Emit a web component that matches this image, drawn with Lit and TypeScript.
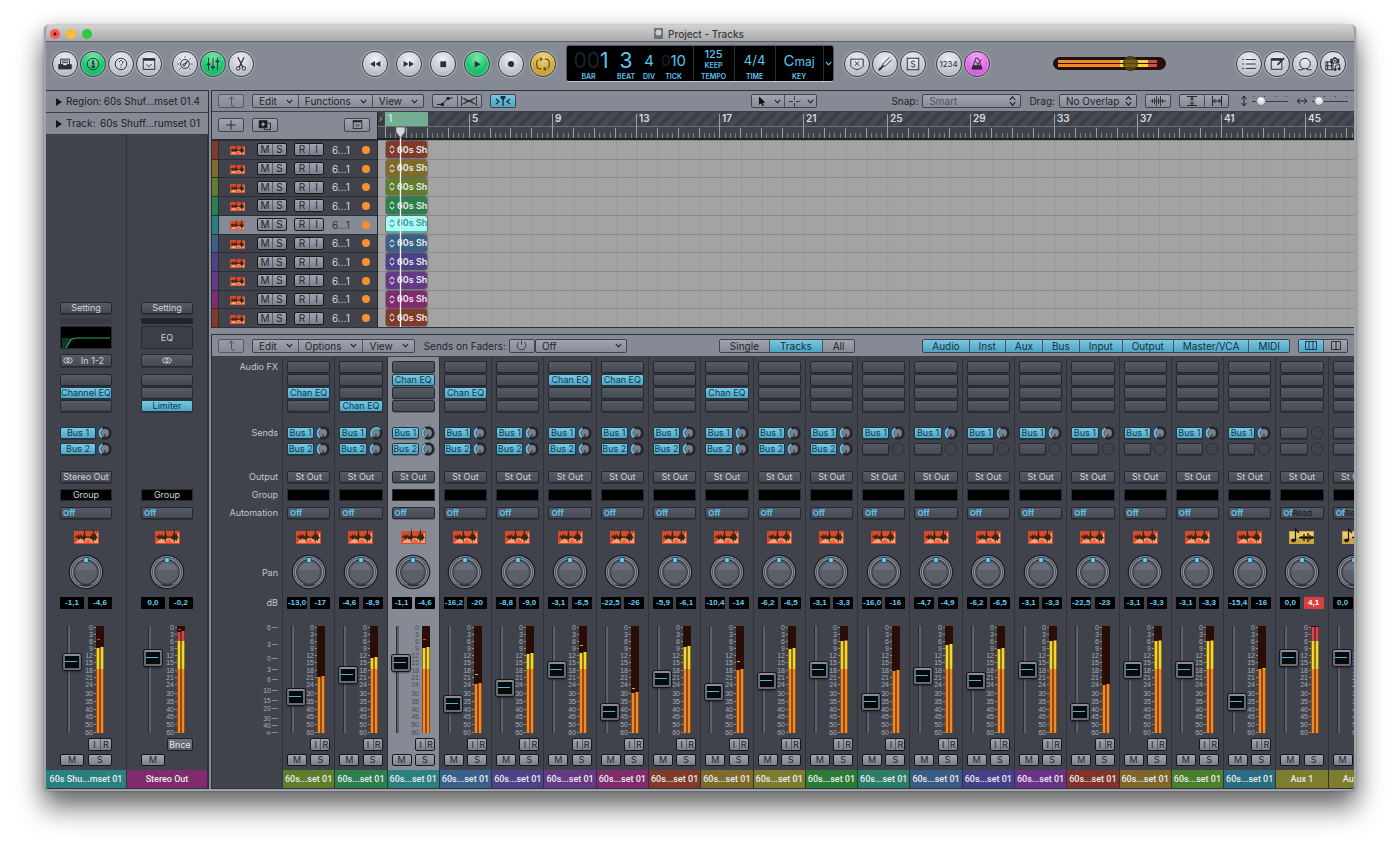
import { LitElement, html, css, svg, nothing } from "lit";
import { customElement, state } from "lit/decorators.js";
import { classMap } from "lit/directives/class-map.js";

interface Channel {
  name: string;
  color: string;
  db: [string, string];
  fader: number;
  level: number;
  peak?: number;
  fx: number;
  sends: number;
  bigSend?: boolean;
  aux?: boolean;
  clip?: boolean;
}

const ch = (color: string, a: string, b: string, fader: number, level: number, fx = -1, sends = 2, more: Partial<Channel> = {}): Channel => ({
  name: "60s...set 01", color, db: [a, b], fader, level, fx, sends, ...more,
});

const CHANNELS: Channel[] = [
  ch("#5f7d2c", "-13,0", "-17", 36, 50, 2),
  ch("#2c804b", "-4,6", "-8,9", 58, 31, 3, 2, { bigSend: true }),
  ch("#2b7f7f", "-1,1", "-4,6", 70, 21, 1, 2, { peak: 12 }),
  ch("#3a6088", "-16,2", "-20", 29, 57, 2, 2, { peak: 47 }),
  ch("#4f4189", "-8,8", "-9,0", 45, 27),
  ch("#653a84", "-3,1", "-6,5", 63, 26, 1, 2, { peak: 18 }),
  ch("#7f2b6d", "-22,5", "-26", 21, 66, 1, 2, { peak: 61 }),
  ch("#81392a", "-5,9", "-6,1", 54, 20),
  ch("#7e6a2b", "-10,4", "-14", 41, 43, 2, 2, { peak: 34 }),
  ch("#7c7c2e", "-6,2", "-6,5", 52, 22),
  ch("#2b7b36", "-3,1", "-3,3", 63, 14),
  ch("#2c7d68", "-16,0", "-16", 31, 44, -1, 1),
  ch("#395a82", "-4,7", "-4,9", 57, 18, -1, 1),
  ch("#44418a", "-6,2", "-6,5", 52, 22, -1, 1),
  ch("#6a3189", "-3,1", "-3,3", 63, 14, -1, 1),
  ch("#81342a", "-22,5", "-23", 21, 58, -1, 1),
  ch("#7e662b", "-3,1", "-3,3", 63, 14, -1, 1),
  ch("#4a7f2c", "-3,1", "-3,3", 63, 14, -1, 1),
  ch("#2b6c80", "-15,4", "-16", 31, 42, -1, 1),
  ch("#7e7c2e", "0,0", "4,1", 75, 0, -1, 0, { name: "Aux 1", aux: true, clip: true }),
  ch("#7e7c2e", "0,0", "-6,0", 75, 20, -1, 0, { name: "Aux 2", aux: true }),
];

const TRACK_COLORS = ["#81392a", "#7e6a2b", "#5f7d2c", "#2c804b", "#2b7f7f", "#3a6088", "#4f4189", "#653a84", "#7f2b6d", "#81392a"];

const BAR = 20.9;

const SCALE: [string, number][] = [
  ["0", 0], ["3", 7], ["6", 14], ["9", 21], ["12", 28], ["15", 35], ["18", 43], ["21", 50],
  ["24", 57], ["30", 66], ["35", 74], ["40", 82], ["45", 89], ["50", 97], ["60", 105],
];
const FADER_SCALE: [string, number][] = [
  ["6", 0], ["3", 17], ["0", 31], ["3", 42], ["6", 52], ["10", 63], ["15", 73], ["20", 81], ["30", 91], ["40", 98], ["∞", 105],
];

const line = (body: unknown, size = 18) => html`<svg class="ico" width=${size} height=${size} viewBox="0 0 18 18" fill="none" stroke="currentColor" stroke-width="1.1" aria-hidden="true">${body}</svg>`;

const ICONS: Record<string, () => unknown> = {
  library: () => line(svg`<path d="M4 9V3.500h10V9M5.500 5.500h7M5.500 7.500h7"/><path d="M2 9.500h4.500l1 1.500h3l1-1.500H16v5H2z" fill="currentColor"/>`),
  info: () => line(svg`<circle cx="9" cy="9" r="6.500"/><path d="M7.500 8h2v4M7 12.300h4.300" stroke-width="1.700"/><circle cx="9" cy="5.600" r="1.200" fill="currentColor" stroke="none"/>`),
  help: () => line(svg`<circle cx="9" cy="9" r="6.500"/><path d="M6.900 7.300c0-1.500 1-2.300 2.200-2.300s2.100.8 2.100 1.900c0 1.600-2.100 1.600-2.100 3.600M9 11.800v1.300"/>`),
  toolbar: () => line(svg`<rect x="2.500" y="3" width="13" height="12"/><path d="M2.500 4h13" stroke-width="2.500"/><path d="M6 9l3 3 3-3"/>`),
  smart: () => line(svg`<circle cx="9" cy="9" r="5"/><circle cx="8" cy="10" r="1.300"/><path d="M9 9l3-3" stroke-width="1.500"/><path d="M9 .500V2M.5 9H2M16 9h1.500M3 3l1 1M14 4l1-1M3 15l1-1M14 14l1 1"/>`),
  mixer: () => line(svg`<path d="M4 2v14M9 2v14M14 2v14"/><path d="M1.800 9.500h4.400M6.800 12.500h4.400M11.800 6h4.400" stroke-width="2"/>`),
  scissors: () => line(svg`<path d="M5.500 1.500l5.500 11M12.500 1.500L7 12.500" stroke-width="1.400"/><circle cx="5.800" cy="14" r="2"/><circle cx="12.200" cy="14" r="2"/>`),
  rewind: () => line(svg`<path d="M9 5.500v7L3.500 9zM15 5.500v7L9.500 9z" fill="currentColor" stroke="none"/>`),
  forward: () => line(svg`<path d="M3 5.500v7L8.500 9zM9 5.500v7L14.500 9z" fill="currentColor" stroke="none"/>`),
  stop: () => line(svg`<rect x="6" y="6" width="6.500" height="6.500" fill="currentColor" stroke="none"/>`),
  play: () => line(svg`<path d="M6.500 5.500v7.500L13 9.200z" fill="currentColor" stroke="none"/>`),
  record: () => line(svg`<circle cx="9" cy="9" r="3.500" fill="currentColor" stroke="none"/>`),
  cycle: () => line(svg`<path d="M7 14.500H5.500a3.500 3.500 0 0 1-3.500-3.500V7a3 3 0 0 1 2-2.800M11 3.500h1.500A3.500 3.500 0 0 1 16 7v4a3 3 0 0 1-2 2.800M5 3.500h2.500M13 14.500h-2.500M6 1.500l2.300 2L6 5.500M12 12.500l-2.300 2 2.300 2"/>`),
  replace: () => line(svg`<path d="M2 3.500h14v6.500c0 3-3 4-7 5.500-4-1.500-7-2.500-7-5.500zM6.500 6l5 5M11.500 6l-5 5"/>`),
  tuner: () => line(svg`<path d="M7.300 8L14 1.500M10 10.700L16.500 4.500M7.300 8c-1 1.200-.8 2.500-.3 3 .5.500 1.900.700 3-.3"/><path d="M2 16l5-5" stroke-width="2.200"/>`),
  solo: () => line(svg`<rect x="2.500" y="2.500" width="13" height="13"/><path d="M11.200 6.700C10.700 5.300 7 5.200 7 7.200c0 2.200 4.300 1.200 4.300 3.500 0 2.200-4.200 2-4.500.2"/>`),
  metronome: () => line(svg`<path d="M7.500 2.500h3l4 12h-11z"/><path d="M4.700 11h8.600l1.200 3.500h-11z" fill="currentColor"/><path d="M9 11l5-7M6.500 5.500l4 4"/>`),
  list: () => line(svg`<path d="M5.500 4h11M5.500 9h11M5.500 14h11M1.500 4h2M1.500 9h2M1.500 14h2"/>`),
  note: () => line(svg`<path d="M2.500 3h12v12h-12z"/><path d="M2.500 4h12" stroke-width="2.500"/><path d="M17 2.500L9.500 10" stroke-width="2"/>`),
  loop: () => line(svg`<circle cx="9" cy="8.500" r="6"/><path d="M1.500 15.500h5c.3-.8 0-1.300-.5-1.700M16.500 15.500h-5c-.3-.8 0-1.300.5-1.700"/>`),
  media: () => line(svg`<rect x="1" y="6.500" width="8" height="9"/><path d="M3 6.500v9M7.500 6.500v9M1 11h8"/><path d="M6 3h2.500l1-1.500h3l1 1.500H16v5.500H6z" fill="currentColor" stroke="none"/><circle cx="11" cy="5.500" r="1.700" stroke="#ddd" fill="none"/><path d="M12 15.500v-5l4.500-1v5"/><circle cx="11.300" cy="15.300" r="1.200" fill="currentColor"/><circle cx="15.800" cy="14.500" r="1.200" fill="currentColor"/>`),
  up: () => line(svg`<path d="M12.500 15.500c-2.800 0-3.500-1-3.500-3V3M5.500 6.500L9 2.500l3.500 4"/>`, 13),
  plus: () => line(svg`<path d="M9 3v12M3 9h12"/>`, 14),
  dup: () => line(svg`<rect x="1.500" y="3.500" width="10" height="9" fill="currentColor"/><path d="M12 6.500h4v8.500H8v-2.500"/><path d="M6.500 5.500v5M4 8h5" stroke="#b4b8c2" stroke-width="1.500"/>`, 14),
  panel: () => line(svg`<rect x="3" y="3.500" width="12" height="11"/><path d="M3 5h12" stroke-width="2"/><path d="M6.500 8.500l2.500 3 2.500-3"/>`, 13),
  curve: () => html`<svg width="20" height="12" viewBox="0 0 20 12" fill="none" stroke="currentColor" aria-hidden="true"><path d="M2 9.500h5L13 3h5"/><rect x="6" y="8" width="3" height="3" fill="currentColor" stroke="none"/><rect x="11.500" y="2" width="3" height="3" fill="currentColor" stroke="none"/></svg>`,
  flex: () => html`<svg width="20" height="12" viewBox="0 0 20 12" fill="none" stroke="currentColor" stroke-width=".8" aria-hidden="true"><path d="M2.500 1v10M17.500 1v10M2.500 2q7.500 8 15 0M2.500 10q7.500-8 15 0M5 3l10 6M15 3L5 9"/></svg>`,
  catch: () => html`<svg width="18" height="12" viewBox="0 0 18 12" fill="none" stroke="currentColor" stroke-width="1.300" aria-hidden="true"><path d="M2 4l3 2.500L2 9M16 4l-3 2.500L16 9M9 3v8"/><path d="M6.500 1h5v2L9 5.500 6.500 3z" fill="currentColor" stroke="none"/></svg>`,
  pointer: () => line(svg`<path d="M5.500 2v12l3-2.600 1.800 4 2-.9-1.800-3.900h4z" fill="#0c0d10" stroke="none"/>`, 13),
  cross: () => line(svg`<path d="M9 1v6M9 11v6M1 9h6M11 9h6"/>`, 13),
  power: () => line(svg`<path d="M9 2v6M5.500 4a6 6 0 1 0 7 0"/>`, 13),
  wave: () => html`<svg width="18" height="12" viewBox="0 0 18 12" stroke="currentColor" stroke-width=".8" aria-hidden="true"><path d="M1 6h16M3.500 4v4M5.500 3v6M7.500 1v10M9.500 3v6M11.500 1v10M13.500 4v4"/></svg>`,
  vzoom: () => html`<svg width="12" height="12" viewBox="0 0 12 12" fill="none" stroke="currentColor" aria-hidden="true"><path d="M1 1.500h10M1 10.500h10M6 2v8M4 4.500l2-2 2 2M4 7.500l2 2 2-2"/></svg>`,
  hzoom: () => html`<svg width="12" height="12" viewBox="0 0 12 12" fill="none" stroke="currentColor" aria-hidden="true"><path d="M1.500 1v10M10.500 1v10M2 6h8M4.500 4l-2 2 2 2M7.500 4l2 2-2 2"/></svg>`,
  varrow: () => html`<svg width="8" height="12" viewBox="0 0 8 12" fill="none" stroke="currentColor" aria-hidden="true"><path d="M4 1v10M1.500 4L4 1l2.500 3M1.500 8L4 11l2.500-3"/></svg>`,
  harrow: () => html`<svg width="12" height="8" viewBox="0 0 12 8" fill="none" stroke="currentColor" aria-hidden="true"><path d="M1 4h10M4 1.500L1 4l3 2.500M8 1.500L11 4 8 6.500"/></svg>`,
  wide: () => html`<svg width="12" height="9" viewBox="0 0 12 9" fill="none" stroke="currentColor" stroke-width=".9" aria-hidden="true"><path d="M.5.500h11v8H.5zM4 .500v8M8 .500v8"/></svg>`,
  two: () => html`<svg width="10" height="9" viewBox="0 0 10 9" fill="none" stroke="currentColor" stroke-width=".9" aria-hidden="true"><path d="M.5.500h9v8h-9zM5 .500v8"/></svg>`,
  stereo: () => html`<svg width="10" height="7" viewBox="0 0 10 7" fill="none" stroke="currentColor" aria-hidden="true"><circle cx="3.500" cy="3.500" r="2.700"/><circle cx="6.500" cy="3.500" r="2.700"/></svg>`,
};

const chevron = () => html`<svg class="chev" width="7" height="5" viewBox="0 0 7 5" fill="none" stroke="currentColor" stroke-width="1.200" aria-hidden="true"><path d="M.8.800l2.700 3L6.200.800"/></svg>`;
const updown = () => html`<svg class="updown" width="7" height="10" viewBox="0 0 7 10" fill="none" stroke="currentColor" stroke-width="1.200" aria-hidden="true"><path d="M.8 3.800l2.700-3 2.700 3M.8 6.200l2.700 3 2.700-3"/></svg>`;

const waveIcon = (w: number, h: number) => html`<svg class="wave-icon" width=${w} height=${h} viewBox="0 0 25 16" preserveAspectRatio="none" aria-hidden="true">
  <rect y="3" width="25" height="13" fill="#d94a2b"/><path d="M1 15l8-8 5 3 10-5v10z" fill="#f4a27c"/><path d="M10 15l4-5 4 5z" fill="#ee6840"/>
  <path d="M1 9.500l1.500-2.500 1 1.500 1-2.500 1 2L7 6l1 2.500L9.500 7l1-7 .8 7 1.700 2 1-1 1.500 1L17 7.500l1.500-1.500L19.500 0l.8 6.500L22 6l1 3 1 1-1.500.5-1 2.500-1.500-1.500-.8 4-.9-4-1.800-.5-1-1-1.500-.3-1.500.3-1.500 1-.8 4-.9-4-1.700.5-1.200-1.500-1.500 2-1.500-2z" fill="#3c2713"/></svg>`;

const auxIcon = () => html`<svg class="wave-icon" width="25" height="16" viewBox="0 0 25 16" aria-hidden="true">
  <rect y="3" width="25" height="13" fill="#c9a63f"/><rect x="1" y="4" width="23" height="6" fill="#e8cb6b"/>
  <ellipse cx="4.500" cy="12.500" rx="2.300" ry="1.800" fill="#1a1408"/><path d="M6.500 12.500V1l3.500 4" stroke="#1a1408" stroke-width="1.200" fill="none"/>
  <path d="M10 9.500h15M13 8v3M15 6v7M17 8v3M19 5v9M21 7v5M23 8v3" stroke="#1a1408" stroke-width="1.300"/></svg>`;

const knob = () => html`<button class="knob" aria-label="Pan"><svg width="36" height="36" viewBox="0 0 36 36" aria-hidden="true">
  <circle cx="18" cy="18" r="17.300" fill="#1d1f24"/><circle cx="18" cy="18" r="16" fill="#8a8e98"/><circle cx="18" cy="18" r="14.800" fill="#34373e"/>
  <path d="M12.500 30.500a13.500 13.500 0 1 1 11 0" fill="none" stroke="#9296a0" stroke-width="1.200"/>
  <circle cx="18" cy="18" r="11.500" fill="#5b5f6a" stroke="#4c505a"/><path d="M7.500 16a11 11 0 0 1 21 0z" fill="#6a6e79"/>
  <rect x="15.500" y="3" width="5" height="5.500" rx="1" fill="#1c4258"/><rect x="16.200" y="4" width="3.600" height="4" fill="#62d0fa"/></svg></button>`;

const sendKnob = (on: boolean, big = false) => html`<svg class="send-knob" width="14" height="14" viewBox="0 0 14 14" aria-hidden="true">
  ${on ? svg`<circle cx="7" cy="7" r="6.700" fill="#24262c"/><path d=${big ? "M3.500 11A5.300 5.300 0 1 1 11.200 3.700" : "M4 11.400A5.300 5.300 0 0 1 4.500 2.300"} fill="none" stroke="#5cc3ec" stroke-width="1.900"/><circle cx="7" cy="7" r="3.900" fill="#7c808b"/><path d="M7 8v5" stroke="#24262c"/>`
    : svg`<circle cx="7" cy="7" r="6" fill="none" stroke="#2c2f36"/>`}</svg>`;

const segment = (x: number, level: number) => {
  const bands: [number, number, string][] = [[0, 14, "#d9484c"], [14, 42, "#f3d72e"], [42, 106, "#f58a25"]];
  return bands.map(([a, b, c]) => (level < b ? svg`<rect x=${x} y=${8 + Math.max(a, level)} width="3" height=${b - Math.max(a, level)} fill=${c}/>` : nothing));
};

const meter = (level: number, peak?: number) => html`<svg class="meter" width="25" height="118" viewBox="0 0 25 118" role="img" aria-label="Level">
  ${SCALE.map(([t, y]) => svg`<text x="9" y=${y + 11} text-anchor="end">${t}</text><path class="tick" d="M10 ${y + 8.5}h2"/>`)}
  <rect x="12" y="7" width="8" height="107" fill="#2a0e06"/>
  ${segment(12.5, level)}${segment(16.5, level > 0 ? level - 1 : 0)}
  ${peak !== undefined ? svg`<rect x="13" y=${peak + 8} width="3" height="1" fill=${peak < 14 ? "#e0383c" : "#f5a025"}/>` : nothing}
</svg>`;

@customElement("app-root")
export class AppRoot extends LitElement {
  @state() private selected = 2;
  @state() private track = 4;
  @state() private viewport = window.innerWidth;

  private onResize = () => { this.viewport = window.innerWidth; };

  connectedCallback() {
    super.connectedCallback();
    window.addEventListener("resize", this.onResize);
  }

  disconnectedCallback() {
    window.removeEventListener("resize", this.onResize);
    super.disconnectedCallback();
  }

  static styles = css`
    :host { display: block; box-sizing: border-box; min-height: 100vh; padding: 25px 44px 62px; background: #fff; font: 400 10px/12px Inter, "Liberation Sans", sans-serif; color: #1b1d22; }
    *, *::before { box-sizing: border-box; }
    button, select, input { font: inherit; color: inherit; margin: 0; padding: 0; border: 0; background: none; border-radius: 0; outline: none; }
    svg { display: block; flex: none; }
    label { white-space: nowrap; }
    .window { background: #868a95; border: 2px solid #9fa3ad; border-top: 0; border-radius: 5px 5px 4px 4px; box-shadow: 0 18px 28px rgba(0,0,0,.46), 0 6px 22px rgba(0,0,0,.3), 0 0 2px rgba(0,0,0,.35); overflow: hidden; }
    .title { height: 17px; display: flex; align-items: center; padding: 1px 6px 0 4px; background: linear-gradient(#d2d2d2, #a9a9a9); border-bottom: 1px solid #5b5e66; font-size: 10px; font-weight: 500; color: #3a3a3a; }
    .lights { flex: 1; display: flex; gap: 6px; }
    .light { width: 10px; height: 10px; border-radius: 50%; }
    .light.r { background: radial-gradient(circle, #5b0b08 0 1px, #fb5b55 2px); } .light.y { background: #fcbb34; } .light.g { background: #2fc840; }
    .title .name { display: flex; gap: 5px; align-items: center; }
    .fill { flex: 1; }
    .controls { display: flex; align-items: center; height: 48px; padding: 0 8px 5px 6px; }
    .group { display: flex; gap: 2px; }
    .sp-a { flex: 108; } .sp-b { flex: 64; } .sp-c { flex: 70; }
    .round { width: 26px; height: 26px; border-radius: 50%; border: 1px solid #3a3d45; display: grid; place-items: center; color: #2c2f37; background: radial-gradient(circle at 50% 30%, #eef0f4, #c3c6cf 60%, #9fa3ae); box-shadow: 0 0 0 1px #a5a9b4, inset 0 0 2px #fff; font-size: 8px; }
    .round .ico { width: 16px; height: 16px; }
    .round.on { background: radial-gradient(circle at 50% 25%, #7fe8a9, #1fc673 50%, #12b163); }
    .round.gold { background: radial-gradient(circle at 50% 25%, #f2d778, #d0a634 60%, #b98f25); }
    .round.pink { background: radial-gradient(circle at 50% 25%, #f6a9f8, #df63e6 60%, #c94fd2); }
    .transport { display: flex; gap: 8px; }
    .cycle { margin: 0 10px 0 6px; }
    .lcd { display: flex; width: 268px; height: 37px; background: #000; border-radius: 3px; border: 1px solid #555963; border-bottom-color: #c5c8d0; color: #5cc6f1; overflow: hidden; margin-right: 10px; }
    .lcd .cell { display: grid; grid-template-rows: 25px 10px; justify-items: center; }
    .lcd .cell + .cell.sec { border-left: 1px solid #2c2f33; }
    .lcd .val { align-self: end; line-height: 20px; font-size: 15px; white-space: nowrap; }
    .lcd .big { font-size: 21px; }
    .lcd .dim { color: #17262d; }
    .lcd .lab { font-size: 7px; font-weight: 600; line-height: 12px; }
    .lcd .bar { width: 44px; } .lcd .bar .val { justify-self: end; padding-right: 2px; } .lcd .beat { width: 31px; } .lcd .div { width: 15px; } .lcd .tk { width: 36px; padding-right: 2px; }
    .lcd .tempo { width: 41px; } .lcd .time { width: 41px; } .lcd .time .val { font-size: 13px; line-height: 22px; }
    .lcd .note-key { width: 48px; } .lcd .note-key .val { font-size: 12px; line-height: 18px; } .lcd .note-key b { font-weight: 400; font-size: 15px; }
    .lcd .stack { align-self: end; text-align: center; font-size: 11px; font-weight: 500; line-height: 13px; }
    .lcd .stack small { display: block; font-size: 7px; font-weight: 600; line-height: 10px; }
    .lcd .more { flex: 1; border-left: 1px solid #2c2f33; display: grid; place-items: center; }
    .pair { margin-left: 10px; }
    .master { appearance: none; width: 113px; height: 13px; border-radius: 7px; border: 1px solid #24100a; background: linear-gradient(#25100a, #25100a) 0 5px / 100% 1px no-repeat, linear-gradient(90deg, #25100a 4px, #f58a25 4px 66px, #f3d72e 66px 94px, #d9484c 94px 103px, #25100a 103px) 0 2px / 100% 7px no-repeat, #25100a; }
    .master::-webkit-slider-thumb { appearance: none; width: 15px; height: 15px; border-radius: 50%; background: rgba(90, 74, 20, .85); border: 1px solid #3d3312; }

    .body { display: grid; grid-template-columns: 163px 1fr; gap: 2px; }
    .inspector { display: flex; flex-direction: column; border: 1px solid #2d3037; border-left: 0; }
    .info { display: flex; align-items: center; justify-content: space-between; height: 22px; padding: 0 8px 2px 10px; border-bottom: 1px solid #3c3f47; }
    .info span:first-child::before { content: ""; display: inline-block; border: 4px solid transparent; border-left: 6px solid #15171b; border-right: 0; margin-right: 4px; vertical-align: -1px; }
    .insp-strips { flex: 1; display: grid; grid-template-columns: 1fr 1fr; background: #40434c; }
    .insp-strips .strip { padding-top: 0; border-left: 0; border-right: 1px solid #2f3239; }
    .insp-strips .strip > * { margin-left: 14px; margin-right: 14px; }
    .insp-strips .strip > .tag { margin-left: 0; margin-right: 0; }
    .insp-strips .faders { padding-left: 3px; grid-template-columns: 18px 28px; gap: 3px; }
    .insp-strips .pairs > *, .insp-strips .ir { width: 24px; }
    .push { flex: 1; }
    .thin { height: 6px; background: #383b43; margin-top: 4px; margin-bottom: 2px; }
    .thin.dark { background: #22242a; }
    .eq { height: 23px; border: 1px solid #262830; border-radius: 2px; display: grid; place-items: center; background: #3b3e46; color: #c9ccd3; font-size: 9px; }
    .eq.live { background: #000; }
    .slot.in { display: grid; grid-template-columns: 13px 1fr; margin: 5px 0 7px; height: 13px; }
    .slot.in.solo { grid-template-columns: 1fr; }
    .slot.in > * { place-self: center; }

    .main { display: flex; flex-direction: column; min-width: 0; }
    .panel { border: 1px solid #2d3037; border-right: 0; overflow: hidden; }
    .bar-row { display: flex; align-items: center; height: 21px; padding: 0 6px 0 6px; border-bottom: 1px solid #3c3f47; color: #22252b; }
    .seg { display: flex; height: 14px; border: 1px solid #3a4656; border-radius: 2px; background: linear-gradient(#a1a5b0, #878b96); }
    .seg > button { display: flex; align-items: center; justify-content: center; gap: 9px; padding: 0 5px 0 6px; }
    .seg > button + button { border-left: 1px solid #4a5160; }
    .seg.icons > button { width: 24px; padding: 0; }
    .seg.tools-seg > button { width: 32px; gap: 6px; padding: 0; }
    .seg.faint { opacity: .7; }
    .seg .sel, .seg.blue { background: linear-gradient(#7cc6de, #4ea5c4); color: #142f3d; }
    .m8 { margin-left: 8px; }
    .seg.blue > button { padding: 0 9px; } .seg.plain > button { padding: 0 10px; }
    .g-a { flex: 237; } .g-b { flex: 75; } .g-c { flex: 95; } .g-d { flex: 69; }
    .pick { position: relative; display: flex; align-items: center; height: 14px; border: 1px solid #3a4656; border-radius: 2px; background: linear-gradient(#a1a5b0, #878b96); }
    .pick select { appearance: none; width: 100%; height: 12px; padding: 0 14px 0 6px; line-height: 12px; }
    .pick .updown, .pick .chev { position: absolute; right: 4px; pointer-events: none; }
    .snap { width: 99px; color: #4f535d; margin-left: 4px; } .snap svg { color: #22252b; } .drag { width: 78px; margin-left: 4px; }
    .off { width: 92px; }
    .sof { margin: 0 3px 0 9px; }
    .zooms { display: flex; align-items: center; gap: 4px; margin-left: 11px; }
    .zooms + .zooms { margin-left: 8px; }
    .zoom { appearance: none; width: 36px; height: 10px; background: linear-gradient(#3a3d45, #3a3d45) 0 5px / 100% 1px no-repeat, repeating-linear-gradient(90deg, #3a3d45 0 1px, transparent 1px 11px) 1px 0 / 100% 1px no-repeat; }
    .zoom::-webkit-slider-thumb { appearance: none; width: 10px; height: 10px; border-radius: 50%; background: radial-gradient(circle at 50% 30%, #fff, #b9bcc5); border: 1px solid #777b86; }

    .tracks { display: grid; grid-template-columns: 166px 1fr; grid-template-rows: 28px 187px; position: relative; }
    .tools { display: flex; align-items: center; padding: 0 7px 2px 6px; border-bottom: 1px solid #24262c; border-right: 1px solid #24262c; }
    .ruler { background: #40434c; overflow: hidden; }
    .ruler svg { width: 100%; }
    .ruler text { font-size: 10px; font-weight: 600; fill: #d9dbe0; }
    .heads { display: flex; flex-direction: column; background: #24262c; border-right: 1px solid #24262c; }
    .head { flex: 1; display: flex; align-items: center; background: #40434c; border-top: 1px solid #2a2d34; color: #d5d8df; font-size: 10px; cursor: default; }
    .head.sel { background: #868a95; color: #2c2f37; }
    .head .chip { width: 7px; align-self: stretch; margin-right: 11px; border-right: 1px solid #2a2d34; }
    .two { display: grid; grid-template-columns: 1fr 1fr; width: 30px; height: 13px; border: 1px solid #15171b; border-radius: 2px; background: linear-gradient(#a0a4af, #7c808c); color: #20232a; }
    .two button { line-height: 11px; } .two button + button { border-left: 1px solid #565b67; }
    .head .two { font-size: 10px; } .head .a { margin-left: 12px; } .head .b { margin: 0 8px 0 7px; }
    .dot { width: 8px; height: 8px; border-radius: 50%; background: #f7902c; margin-left: auto; margin-right: 7px; }
    .lanes { display: flex; flex-direction: column; background: linear-gradient(90deg, #989998 1px, transparent 1px) 8px 0 #a3a4a2; }
    .lane { flex: 1; border-top: 1px solid #888988; padding-left: 8px; display: flex; }
    .region { width: 41px; height: 17px; border-radius: 3px; display: flex; align-items: center; gap: 2px; padding-left: 3px; color: #eceef2; font-size: 9px; font-weight: 600; white-space: nowrap; overflow: hidden; box-shadow: 0 0 0 1px rgba(0,0,0,.25); }
    .region.sel { background: #a6fdf6; color: #3f8f8c; border-bottom: 2px solid #49b3ae; }
    .region svg { width: 6px; height: 9px; }
    .playhead { position: absolute; left: 183px; top: 14px; bottom: 0; width: 11px; }
    .gap { height: 6px; }

    .mixer .bar-row { height: 22px; }
    .desk { display: flex; background: #40434c; overflow: hidden; }
    .labels { flex: none; width: 70px; display: flex; flex-direction: column; align-items: flex-end; padding: 4px 4px 0 0; color: #c3c6cd; font-size: 9px; line-height: 12px; }
    .labels .l1 { margin-bottom: 54px; } .labels .l2 { margin-bottom: 32px; } .labels .l3 { margin-bottom: 6px; } .labels .l4 { margin-bottom: 6px; } .labels .l5 { margin-bottom: 48px; } .labels .l6 { margin-bottom: 18px; } .labels .l7 { margin-bottom: 10px; }
    .strips { flex: 1; min-width: 0; display: flex; overflow: hidden; }
    .strips .strip { flex: 0 0 calc(100% / 20.5); }
    .strip { display: flex; flex-direction: column; padding-top: 4px; border-left: 1px solid #2f3239; min-width: 0; }
    .strips .strip > * { margin-left: 4px; margin-right: 4px; }
    .strips .strip > .tag { margin-left: 0; margin-right: 0; }
    .strip.sel { background: #868a95; }
    .slot { display: block; width: 100%; height: 12px; border: 1px solid #25272d; border-radius: 2px; background: linear-gradient(#575b66, #454953); color: #d0d3da; font-size: 9px; line-height: 10px; text-align: center; white-space: nowrap; overflow: hidden; box-shadow: 0 1px 0 rgba(0,0,0,.25); }
    .slot.blue { background: linear-gradient(#78c8e2, #4da6c6); color: #10394c; border-color: #1d3541; }
    .fx { display: flex; flex-direction: column; gap: 1px; }
    .sends { display: grid; gap: 4px; margin-top: 15px; height: 28px; }
    .send { display: flex; justify-content: space-between; align-items: center; height: 12px; }
    .send .slot { flex: 1; width: auto; margin-right: 2px; }
    .send-knob { margin: -1px 0; }
    .wrap { display: block; } .out { margin-top: 16px; height: 12px; }
    .grp { height: 12px; margin-top: 6px; background: #000; border: 1px solid #2a2c33; color: #d0d3da; font-size: 9px; line-height: 10px; text-align: center; }
    .auto { margin-top: 6px; height: 12px; }
    .auto .slot { text-align: left; padding-left: 2px; color: #5cc6f2; font-size: 8px; font-weight: 700; }
    .auto i { font-style: normal; color: #17191d; font-weight: 400; }
    .pic { margin-top: 9px; display: grid; place-items: center; }
    .pan { margin-top: 10px; display: grid; place-items: center; height: 36px; }
    .pairs { display: flex; justify-content: space-between; height: 12px; }
    .pairs > * { width: 20px; height: 12px; }
    .dbs { margin-top: 7px; }
    .db { background: #000; color: #66ccf6; font-size: 8px; font-weight: 700; line-height: 12px; text-align: center; border-radius: 1px; white-space: nowrap; font-family: "Liberation Sans", sans-serif; }
    .db.clip { background: #d9403c; color: #fff; }
    .faders { display: grid; grid-template-columns: 18px 1fr; margin-top: 10px; height: 132px; }
    .fader { appearance: none; writing-mode: vertical-lr; direction: rtl; width: 18px; height: 122px; background: linear-gradient(90deg, #2a2c33 0 1px, #5c606b 1px 3px) 4px 7px / 3px 107px no-repeat; }
    .fader::-webkit-slider-thumb { appearance: none; width: 18px; height: 16px; border: 2px solid #676b76; border-top-color: #8a8e99; border-radius: 2px; background: linear-gradient(#4fb4dc, #4fb4dc) 0 5px / 12px 1px no-repeat, #08090b; box-shadow: 0 0 0 1px #15171b, 0 2px 2px rgba(0,0,0,.4); }
    .col { display: flex; flex-direction: column; align-items: flex-end; justify-content: space-between; }
    .strips .col .meter { margin-right: 0; }
    .insp-strips .col .meter { align-self: flex-start; }
    .meter text, .fscale text { font-size: 7px; fill: #a9adb6; font-family: "Liberation Sans", sans-serif; }
    .tick { stroke: #8b8f98; }
    .strip.sel .meter text { fill: #4a4e58; }
    .ir { width: 20px; font-size: 9px; } .ms { margin-top: 3px; }
    .bnce { width: 26px; height: 13px; border: 1px solid #1c1e23; border-radius: 2px; background: linear-gradient(#70747f, #595d68); color: #e1e3e8; font-size: 9px; line-height: 11px; }
    .key { border: 1px solid #15171b; border-radius: 2px; background: linear-gradient(#a0a4af, #7c808c); color: #20232a; font-size: 9px; line-height: 10px; }
    .tag { margin-top: 4px; height: 18px; line-height: 18px; text-align: center; color: #e8eaee; font-family: Roboto, sans-serif; font-size: 9px; font-weight: 500; white-space: nowrap; overflow: hidden; }
  `;

  private menu(label: string) {
    return html`<button>${label}${chevron()}</button>`;
  }

  private round(icon: string, label: string, cls = "") {
    return html`<button class="round ${cls}" aria-label=${label} title=${label}>${ICONS[icon]()}</button>`;
  }

  private iconSeg(icons: string[], cls = "") {
    return html`<div class="seg icons ${cls}">${icons.map((i) => html`<button aria-label=${i}>${ICONS[i]()}</button>`)}</div>`;
  }

  private lower(c: Channel, bounce = false) {
    return html`
      <div class="wrap auto"><button class="slot">${c.aux ? html`Of<i>Read</i>` : "Off"}</button></div>
      <div class="pic">${c.aux ? auxIcon() : waveIcon(25, 16)}</div>
      <div class="pan">${knob()}</div>
      <div class="pairs dbs"><span class="db">${c.db[0]}</span><span class=${classMap({ db: true, clip: !!c.clip })}>${c.db[1]}</span></div>
      <div class="faders">
        <input class="fader" type="range" min="0" max="106" .value=${String(c.fader)} aria-label="Volume" />
        <div class="col">${meter(c.level, c.peak)}
          ${bounce ? html`<button class="bnce">Bnce</button>` : c.aux ? nothing : html`<div class="two ir"><button>I</button><button>R</button></div>`}
        </div>
      </div>
      <div class="pairs ms"><button class="key">M</button>${bounce ? nothing : html`<button class="key">S</button>`}</div>
      <div class="tag" style="background:${c.color}">${c.name}</div>`;
  }

  private strip(c: Channel, i: number) {
    return html`<section class=${classMap({ strip: true, sel: i === this.selected })} @click=${() => (this.selected = i)}>
      <div class="fx">${[0, 1, 2, 3].map((n) => html`<button class="slot ${n === c.fx ? "blue" : ""}">${n === c.fx ? "Chan EQ" : ""}</button>`)}</div>
      <div class="sends">${[0, 1].map((n) => html`<div class="send"><button class="slot ${n < c.sends ? "blue" : ""}">${n < c.sends ? `Bus ${n + 1}` : ""}</button>${sendKnob(n < c.sends, c.bigSend && n === 0)}</div>`)}</div>
      <div class="wrap out"><button class="slot">St Out</button></div>
      <div class="grp"></div>
      ${this.lower(c)}
    </section>`;
  }

  private inspectorStrips() {
    const a: Channel = ch("#2b7f7f", "-1,1", "-4,6", 71, 21, 1, 2, { peak: 12, name: "60s Shu...mset 01" });
    const b: Channel = ch("#7f2b6d", "0,0", "-0,2", 75, 5, 2, 0, { peak: 2, name: "Stereo Out" });
    return [a, b].map((c, i) => html`<section class="strip">
      <div class="push"></div>
      <div class="wrap"><button class="slot">Setting</button></div>
      <div class="thin ${i ? "dark" : ""}"></div>
      <div class="eq ${i ? "" : "live"}">${i ? "EQ" : html`<svg width="50" height="21" viewBox="0 0 50 21" aria-hidden="true"><path d="M5 21C9 14 10 11 14 11H1v10z" fill="#0d3a25"/><path d="M5 21C9 14 10 11 15 11h34" fill="none" stroke="#2fa368" stroke-width="1.200"/></svg>`}</div>
      <div class="wrap"><button class="slot in ${i ? "solo" : ""}">${ICONS.stereo()}${i ? nothing : html`<span>In 1-2</span>`}</button></div>
      <div class="fx">${[0, 1, 2].map((n) => html`<button class="slot ${n === c.fx ? "blue" : ""}">${n === c.fx ? (i ? "Limiter" : "Channel EQ") : ""}</button>`)}</div>
      <div class="sends">${i ? nothing : [0, 1].map((n) => html`<div class="send"><button class="slot blue">Bus ${n + 1}</button>${sendKnob(true)}</div>`)}</div>
      <div class="wrap out">${i ? nothing : html`<button class="slot">Stereo Out</button>`}</div>
      <div class="grp">Group</div>
      ${this.lower(c, i === 1)}
    </section>`);
  }

  private ruler() {
    const x0 = 8;
    const count = Math.ceil((this.viewport - 424) / BAR);
    const bars = Array.from({ length: Math.max(count, 1) }, (_, i) => i);
    return html`<svg height="28" aria-label="Bars">
      <defs><pattern id="hatch" width="9" height="9" patternUnits="userSpaceOnUse" patternTransform="rotate(45)"><rect width="9" height="9" fill="#474a53"/><rect width="4" height="9" fill="#3c3f47"/></pattern></defs>
      <rect width="100%" height="14" fill="url(#hatch)"/>
      <rect x=${x0 - 1} width="43" height="14" y="0" fill="#72ae92"/>
      <rect y="14" width="100%" height="1" fill="#6a6e78"/>
      <rect y="26" width="100%" height="2" fill="#1e2025"/>
      <path d="M1 2l5 5-5 5z" fill="#6c6f67" stroke="#24262c"/>
      ${bars.map((i) => {
        const x = Math.round(x0 + i * BAR) - 1;
        return svg`<rect x=${x} y=${i % 4 ? 16 : 2} width="1" height=${i % 4 ? 10 : 24} fill="#9b9fa8"/>
          ${[1, 2, 3].map((q) => svg`<rect x=${Math.round(x0 + i * BAR + (q * BAR) / 4) - 1} y="21" width="1" height="5" fill="#7c808a"/>`)}
          ${i % 4 ? nothing : svg`<text x=${x + 3} y="10">${i + 1}</text>`}`;
      })}
    </svg>`;
  }

  render() {
    return html`<main class="window">
      <header class="title">
        <div class="lights"><span class="light r"></span><span class="light y"></span><span class="light g"></span></div>
        <div class="name"><svg width="9" height="11" viewBox="0 0 9 11" aria-hidden="true"><rect width="9" height="11" rx="1" fill="#6b6e74"/><circle cx="4.500" cy="4.500" r="3" fill="#c9ccd1"/></svg>Project - Tracks</div>
        <div class="fill"></div>
      </header>
      <nav class="controls">
        <div class="group">${this.round("library", "Library")}${this.round("info", "Inspector", "on")}${this.round("help", "Quick Help")}${this.round("toolbar", "Toolbar")}</div>
        <div class="group pair">${this.round("smart", "Smart Controls")}${this.round("mixer", "Mixer", "on")}${this.round("scissors", "Editors")}</div>
        <div class="sp-a"></div>
        <div class="transport">${this.round("rewind", "Rewind")}${this.round("forward", "Forward")}${this.round("stop", "Stop")}${this.round("play", "Play", "on")}${this.round("record", "Record")}</div>
        <div class="cycle">${this.round("cycle", "Cycle", "gold")}</div>
        <div class="lcd">
          <div class="cell bar"><span class="val big"><span class="dim">00</span>1</span><span class="lab">BAR</span></div>
          <div class="cell beat"><span class="val big">3</span><span class="lab">BEAT</span></div>
          <div class="cell div"><span class="val">4</span><span class="lab">DIV</span></div>
          <div class="cell tk"><span class="val"><span class="dim">0</span>10</span><span class="lab">TICK</span></div>
          <div class="cell sec tempo"><span class="stack">125<small>KEEP</small></span><span class="lab">TEMPO</span></div>
          <div class="cell sec time"><span class="val">4/4</span><span class="lab">TIME</span></div>
          <div class="cell sec note-key"><span class="val"><b>C</b>maj</span><span class="lab">KEY</span></div>
          <button class="more" aria-label="Display mode">${chevron()}</button>
        </div>
        <div class="group">${this.round("replace", "Replace")}${this.round("tuner", "Tuner")}${this.round("solo", "Solo")}</div>
        <div class="group pair"><button class="round">1234</button>${this.round("metronome", "Metronome", "pink")}</div>
        <div class="sp-b"></div>
        <input class="master" type="range" min="0" max="100" value="72" aria-label="Master volume" />
        <div class="sp-c"></div>
        <div class="group">${this.round("list", "List Editors")}${this.round("note", "Note Pad")}${this.round("loop", "Loops")}${this.round("media", "Browsers")}</div>
      </nav>
      <div class="body">
        <aside class="inspector">
          <div class="info"><span>Region:</span><span>60s Shuf...mset 01.4</span></div>
          <div class="info"><span>Track:</span><span>60s Shuff...rumset 01</span></div>
          <div class="insp-strips">${this.inspectorStrips()}</div>
        </aside>
        <div class="main">
          <section class="panel">
            <div class="bar-row">
              ${this.iconSeg(["up"], "faint")}
              <div class="seg m8">${this.menu("Edit")}${this.menu("Functions")}${this.menu("View")}</div>
              <div class="m8">${this.iconSeg(["curve", "flex"])}</div>
              <div class="m8">${this.iconSeg(["catch"], "blue")}</div>
              <div class="g-a"></div>
              <div class="seg tools-seg"><button aria-label="Left-click tool">${ICONS.pointer()}${chevron()}</button><button aria-label="Command-click tool">${ICONS.cross()}${chevron()}</button></div>
              <div class="g-b"></div>
              <label for="snap">Snap:</label><div class="pick snap"><select id="snap"><option>Smart</option></select>${updown()}</div>
              <label class="m8" for="drag">Drag:</label><div class="pick drag"><select id="drag"><option>No Overlap</option></select>${updown()}</div>
              <div class="m8">${this.iconSeg(["wave"])}</div>
              <div class="m8">${this.iconSeg(["vzoom", "hzoom"])}</div>
              <div class="zooms">${ICONS.varrow()}<input class="zoom" type="range" value="14" aria-label="Vertical zoom" /></div>
              <div class="zooms">${ICONS.harrow()}<input class="zoom" type="range" value="8" aria-label="Horizontal zoom" /></div>
            </div>
            <div class="tracks">
              <div class="tools">${this.iconSeg(["plus"])}<div class="m8">${this.iconSeg(["dup"])}</div><div class="fill"></div>${this.iconSeg(["panel"])}</div>
              <div class="ruler">${this.ruler()}</div>
              <div class="heads">${TRACK_COLORS.map((c, i) => html`<div class=${classMap({ head: true, sel: i === this.track })} @click=${() => (this.track = i)}>
                <span class="chip" style="background:${c}"></span>${waveIcon(15, 11)}
                <div class="two a"><button>M</button><button>S</button></div><div class="two b"><button>R</button><button>I</button></div>6...1<span class="dot"></span></div>`)}</div>
              <div class="lanes" style="background-size:${BAR}px 100%">${TRACK_COLORS.map((c, i) => html`<div class="lane"><div class=${classMap({ region: true, sel: i === this.track })} style=${i === this.track ? "" : `background:${c}`}>${updown()}60s Sh</div></div>`)}</div>
              <svg class="playhead" viewBox="0 0 11 201" preserveAspectRatio="xMidYMin slice" aria-hidden="true"><path d="M5.500 10v400" stroke="#f4f4f4" stroke-width="1.300"/><path d="M1 1h9v5l-4.500 6L1 6z" fill="#d4d6da" stroke="#6b6e76"/></svg>
            </div>
          </section>
          <div class="gap"></div>
          <section class="panel mixer">
            <div class="bar-row">
              ${this.iconSeg(["up"], "faint")}
              <div class="seg m8">${this.menu("Edit")}${this.menu("Options")}${this.menu("View")}</div>
              <label class="sof" for="sof">Sends on Faders:</label>
              ${this.iconSeg(["power"])}
              <div class="pick off"><select id="sof"><option>Off</option></select>${chevron()}</div>
              <div class="g-c"></div>
              <div class="seg plain"><button>Single</button><button class="sel">Tracks</button><button>All</button></div>
              <div class="g-d"></div>
              <div class="seg blue">${["Audio", "Inst", "Aux", "Bus", "Input", "Output", "Master/VCA", "MIDI"].map((t) => html`<button>${t}</button>`)}</div>
              <div class="seg icons m8"><button class="sel" aria-label="Narrow strips">${ICONS.wide()}</button><button aria-label="Wide strips">${ICONS.two()}</button></div>
            </div>
            <div class="desk">
              <div class="labels">
                <span class="l1">Audio FX</span><span class="l2">Sends</span><span class="l3">Output</span><span class="l4">Group</span><span class="l5">Automation</span><span class="l6">Pan</span><span class="l7">dB</span>
                <svg class="fscale" width="24" height="118" viewBox="0 0 24 118" role="img" aria-label="Fader scale">${FADER_SCALE.map(([t, y]) => svg`<text x="17" y=${y + 11} text-anchor="end">${t}</text><path class="tick" d="M18 ${y + 8.5}h6"/>`)}</svg>
              </div>
              <div class="strips">${CHANNELS.map((c, i) => this.strip(c, i))}</div>
            </div>
          </section>
        </div>
      </div>
    </main>`;
  }
}
